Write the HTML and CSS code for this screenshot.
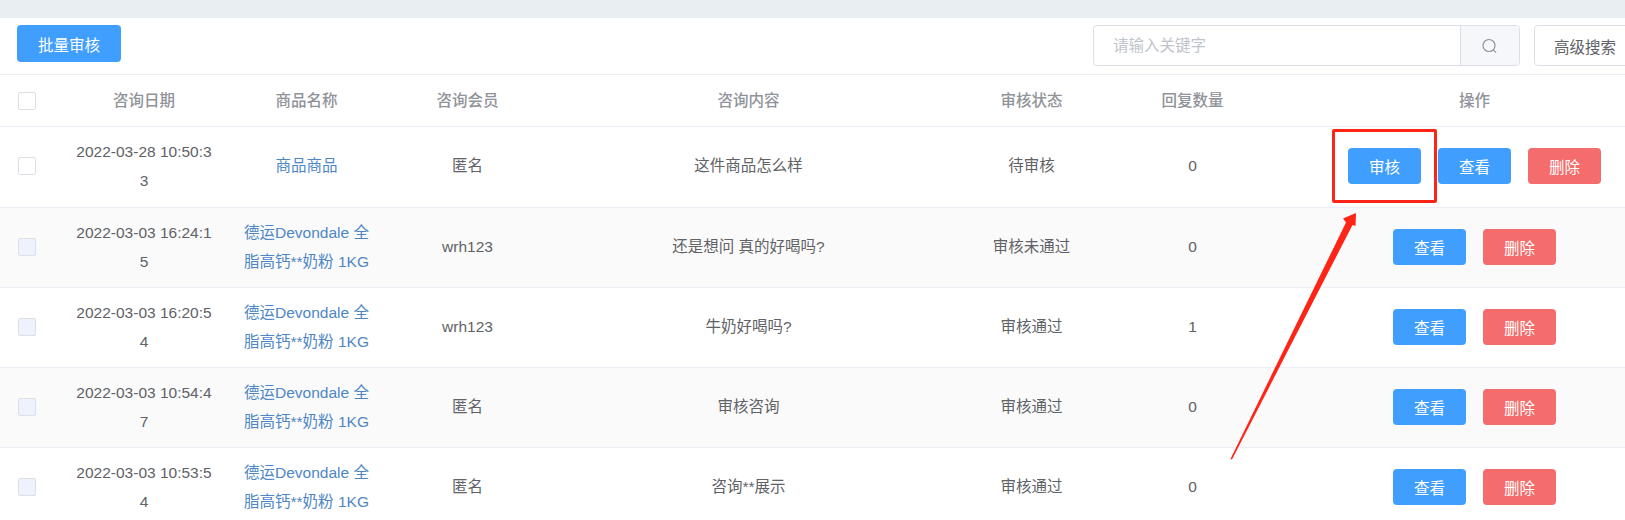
FILE: index.html
```html
<!DOCTYPE html>
<html lang="zh-CN">
<head>
    <meta charset="UTF-8">
    <title>商品咨询</title>
    <link rel="stylesheet" href="styles.css">
</head>
<body>
    <div class="top-band"></div>
    <div class="wrapper">
        <div class="toolbar">
            <button class="btn btn-primary btn-batch" type="button">批量审核</button>
            <div class="toolbar-right">
                <div class="search">
                    <div class="search-input">请输入关键字</div>
                    <div class="search-append">
                        <svg width="16" height="16" viewBox="0 0 16 16" fill="none" stroke="#909399" stroke-width="1.2">
                            <circle cx="7" cy="7.5" r="6"/>
                            <path d="M11.3 11.8 L14.1 14.6"/>
                        </svg>
                    </div>
                </div>
                <button class="btn btn-plain" type="button">高级搜索</button>
            </div>
        </div>

        <table class="data-table">
            <colgroup>
                <col class="col-check">
                <col class="col-date">
                <col class="col-goods">
                <col class="col-member">
                <col class="col-content">
                <col class="col-status">
                <col class="col-reply">
                <col class="col-ops">
            </colgroup>
            <thead>
                <tr>
                    <th class="cell-check"><span class="checkbox"></span></th>
                    <th>咨询日期</th>
                    <th>商品名称</th>
                    <th>咨询会员</th>
                    <th>咨询内容</th>
                    <th>审核状态</th>
                    <th>回复数量</th>
                    <th>操作</th>
                </tr>
            </thead>
            <tbody>
                <tr class="row-pending">
                    <td class="cell-check"><span class="checkbox"></span></td>
                    <td class="cell-date">2022-03-28 10:50:33</td>
                    <td class="cell-goods"><a class="goods-link">商品商品</a></td>
                    <td>匿名</td>
                    <td>这件商品怎么样</td>
                    <td>待审核</td>
                    <td>0</td>
                    <td>
                        <div class="ops">
                            <button class="btn btn-primary" type="button">审核</button>
                            <button class="btn btn-primary" type="button">查看</button>
                            <button class="btn btn-danger" type="button">删除</button>
                        </div>
                    </td>
                </tr>
                <tr>
                    <td class="cell-check"><span class="checkbox disabled"></span></td>
                    <td class="cell-date">2022-03-03 16:24:15</td>
                    <td class="cell-goods"><a class="goods-link">德运Devondale 全脂高钙**奶粉 1KG</a></td>
                    <td>wrh123</td>
                    <td>还是想问 真的好喝吗?</td>
                    <td>审核未通过</td>
                    <td>0</td>
                    <td>
                        <div class="ops">
                            <button class="btn btn-primary" type="button">查看</button>
                            <button class="btn btn-danger" type="button">删除</button>
                        </div>
                    </td>
                </tr>
                <tr>
                    <td class="cell-check"><span class="checkbox disabled"></span></td>
                    <td class="cell-date">2022-03-03 16:20:54</td>
                    <td class="cell-goods"><a class="goods-link">德运Devondale 全脂高钙**奶粉 1KG</a></td>
                    <td>wrh123</td>
                    <td>牛奶好喝吗?</td>
                    <td>审核通过</td>
                    <td>1</td>
                    <td>
                        <div class="ops">
                            <button class="btn btn-primary" type="button">查看</button>
                            <button class="btn btn-danger" type="button">删除</button>
                        </div>
                    </td>
                </tr>
                <tr>
                    <td class="cell-check"><span class="checkbox disabled"></span></td>
                    <td class="cell-date">2022-03-03 10:54:47</td>
                    <td class="cell-goods"><a class="goods-link">德运Devondale 全脂高钙**奶粉 1KG</a></td>
                    <td>匿名</td>
                    <td>审核咨询</td>
                    <td>审核通过</td>
                    <td>0</td>
                    <td>
                        <div class="ops">
                            <button class="btn btn-primary" type="button">查看</button>
                            <button class="btn btn-danger" type="button">删除</button>
                        </div>
                    </td>
                </tr>
                <tr>
                    <td class="cell-check"><span class="checkbox disabled"></span></td>
                    <td class="cell-date">2022-03-03 10:53:54</td>
                    <td class="cell-goods"><a class="goods-link">德运Devondale 全脂高钙**奶粉 1KG</a></td>
                    <td>匿名</td>
                    <td>咨询**展示</td>
                    <td>审核通过</td>
                    <td>0</td>
                    <td>
                        <div class="ops">
                            <button class="btn btn-primary" type="button">查看</button>
                            <button class="btn btn-danger" type="button">删除</button>
                        </div>
                    </td>
                </tr>
            </tbody>
        </table>
    </div>

    <!-- red annotation drawn over the screenshot -->
    <div class="mark-box"></div>
    <svg class="mark-arrow" width="1625" height="520" viewBox="0 0 1625 520">
        <polygon points="1356,213 1343,218.5 1346,222.5 1230.5,459 1232,459.5 1352.5,225 1355.5,226" fill="#fe2416"/>
    </svg>
</body>
</html>
```

FILE: styles.css
```css
html, body {
    margin: 0;
    padding: 0;
    height: 520px;
    overflow: hidden;
    background: #fff;
}

body {
    position: relative;
    font-family: "Liberation Sans", "Noto Sans CJK SC", sans-serif;
    font-size: 15.5px;
    color: #606266;
}

.top-band {
    height: 18px;
    background: #e9eef3;
}

.wrapper {
    width: 1680px;
}

.toolbar {
    display: flex;
    justify-content: space-between;
    height: 57px;
    padding: 7px 44px 0 17px;
    box-sizing: border-box;
    border-bottom: 1px solid #ebeef5;
}

.toolbar-right {
    display: flex;
    gap: 14px;
}

.btn {
    height: 36px;
    width: 73px;
    padding: 0;
    border: 0;
    border-radius: 4px;
    font-family: inherit;
    font-size: 15.5px;
    cursor: pointer;
}

.btn-primary {
    background: #409eff;
    color: #fff;
}

.btn-danger {
    background: #f56c6c;
    color: #fff;
}

.btn-batch {
    width: 104px;
    height: 37px;
}

.btn-plain {
    width: 102px;
    height: 41px;
    background: #fff;
    border: 1px solid #dcdfe6;
    color: #606266;
}

.search {
    display: flex;
    width: 427px;
    height: 41px;
    box-sizing: border-box;
    border: 1px solid #dcdfe6;
    border-radius: 4px;
    overflow: hidden;
}

.search-input {
    flex: 1;
    padding-left: 19px;
    line-height: 39px;
    color: #c0c4cc;
}

.search-append {
    display: flex;
    align-items: center;
    justify-content: center;
    width: 58px;
    background: #f5f7fa;
    border-left: 1px solid #dcdfe6;
}

.data-table {
    width: 1680px;
    table-layout: fixed;
    border-collapse: collapse;
}

.col-check { width: 60px; }
.col-date { width: 168px; }
.col-goods { width: 157px; }
.col-member { width: 165px; }
.col-content { width: 397px; }
.col-status { width: 169px; }
.col-reply { width: 153px; }
.col-ops { width: 411px; }

.data-table th,
.data-table td {
    padding: 0 11px;
    text-align: center;
    border-bottom: 1px solid #ebeef5;
    line-height: 29px;
}

.data-table th {
    height: 51px;
    color: #909399;
    font-weight: 500;
}

.data-table td {
    height: 77px;
    padding-bottom: 2px;
}

.data-table .row-pending td {
    padding-bottom: 3px;
}

.data-table tbody tr:nth-child(even) td {
    background: #fafafa;
}

.data-table .cell-check {
    padding-left: 18px;
    padding-right: 0;
    text-align: left;
}

.checkbox {
    display: block;
    width: 18px;
    height: 18px;
    box-sizing: border-box;
    background: #fff;
    border: 1px solid #dcdfe6;
    border-radius: 2px;
}

.checkbox.disabled {
    background: #edf2fc;
}

.data-table .cell-date {
    padding-left: 14px;
    padding-right: 14px;
    word-break: break-all;
}

.data-table .cell-goods {
    padding-left: 12px;
    padding-right: 12px;
}

.goods-link {
    color: #4d86c6;
}

.ops {
    display: flex;
    justify-content: center;
    gap: 17px;
}

.mark-box {
    position: absolute;
    left: 1332px;
    top: 129px;
    width: 105px;
    height: 74px;
    box-sizing: border-box;
    border: 3px solid #fe2416;
    border-radius: 2px;
}

.mark-arrow {
    position: absolute;
    left: 0;
    top: 0;
}
```
